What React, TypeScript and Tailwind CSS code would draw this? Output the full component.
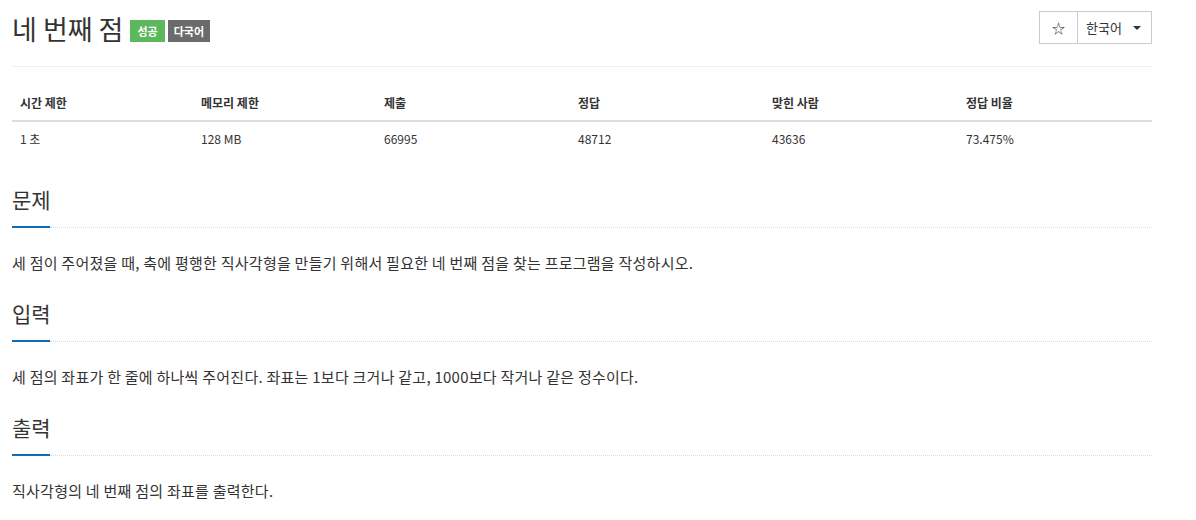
const font = { fontFamily: '"Noto Sans CJK KR", "Noto Sans", sans-serif' };

const stats = [
  { label: "시간 제한", value: "1 초", w: "w-[181px]" },
  { label: "메모리 제한", value: "128 MB", w: "w-[183px]" },
  { label: "제출", value: "66995", w: "w-[194px]" },
  { label: "정답", value: "48712", w: "w-[194px]" },
  { label: "맞힌 사람", value: "43636", w: "w-[194px]" },
  { label: "정답 비율", value: "73.475%", w: "w-[194px]" },
];

const sections = [
  {
    title: "문제",
    body: "세 점이 주어졌을 때, 축에 평행한 직사각형을 만들기 위해서 필요한 네 번째 점을 찾는 프로그램을 작성하시오.",
  },
  {
    title: "입력",
    body: "세 점의 좌표가 한 줄에 하나씩 주어진다. 좌표는 1보다 크거나 같고, 1000보다 작거나 같은 정수이다.",
  },
  {
    title: "출력",
    body: "직사각형의 네 번째 점의 좌표를 출력한다.",
  },
];

function Section({ title, body }: { title: string; body: string }) {
  return (
    <div className="mt-[23px]">
      <h2 className="text-[21px] leading-[30px] text-[#333]">{title}</h2>
      <div className="mt-[12px] flex items-center">
        <div className="h-[2px] w-[38px] bg-[#0e6db7]" />
        <div className="flex-1 border-t border-dotted border-[#d9d9d9]" />
      </div>
      <p className="mt-[23px] text-[15px] leading-[24px] tracking-[0.25px] text-[#333]">{body}</p>
    </div>
  );
}

export default function App() {
  return (
    <div className="w-[1196px] h-[520px] bg-white overflow-hidden" style={font}>
      <div className="ml-[12px] w-[1140px]">
        {/* Title row */}
        <div className="flex items-start justify-between pt-[11px] pb-[20px] border-b border-[#eee]">
          <div className="flex items-center pt-[1px]">
            <h1 className="text-[27px] leading-[34px] text-[#333]">네 번째 점</h1>
            <span className="ml-[7px] mt-[4px] inline-flex h-[22px] items-center bg-[#5cb85c] px-[7px] text-[11px] font-bold text-white">
              성공
            </span>
            <span className="ml-[3px] mt-[4px] inline-flex h-[22px] items-center bg-[#6b6b6b] px-[6px] text-[11px] font-bold text-white">
              다국어
            </span>
          </div>
          <div className="flex h-[33px] border border-[#ccc] text-[13px] text-[#333]">
            <div className="flex w-[38px] items-center justify-center border-r border-[#ccc] text-[13px]">☆</div>
            <div className="flex items-center pl-[8px] pr-[10px]">
              한국어
              <svg className="ml-[11px]" width="8" height="4" viewBox="0 0 8 4">
                <path d="M0 0 L8 0 L4 4 Z" fill="#333" />
              </svg>
            </div>
          </div>
        </div>

        {/* Stats table */}
        <div className="mt-[26px]">
          <div className="flex border-b-2 border-[#ddd] pb-[7px]">
            {stats.map((s) => (
              <div key={s.label} className={`${s.w} px-[8px] text-[12px] font-bold leading-[20px] text-[#333]`}>
                {s.label}
              </div>
            ))}
          </div>
          <div className="flex pt-[7px]">
            {stats.map((s) => (
              <div key={s.label} className={`${s.w} px-[8px] text-[12px] leading-[20px] text-[#333]`}>
                {s.value}
              </div>
            ))}
          </div>
        </div>

        <div className="mt-[35px]">
          {sections.map((s) => (
            <Section key={s.title} title={s.title} body={s.body} />
          ))}
        </div>
      </div>
    </div>
  );
}
